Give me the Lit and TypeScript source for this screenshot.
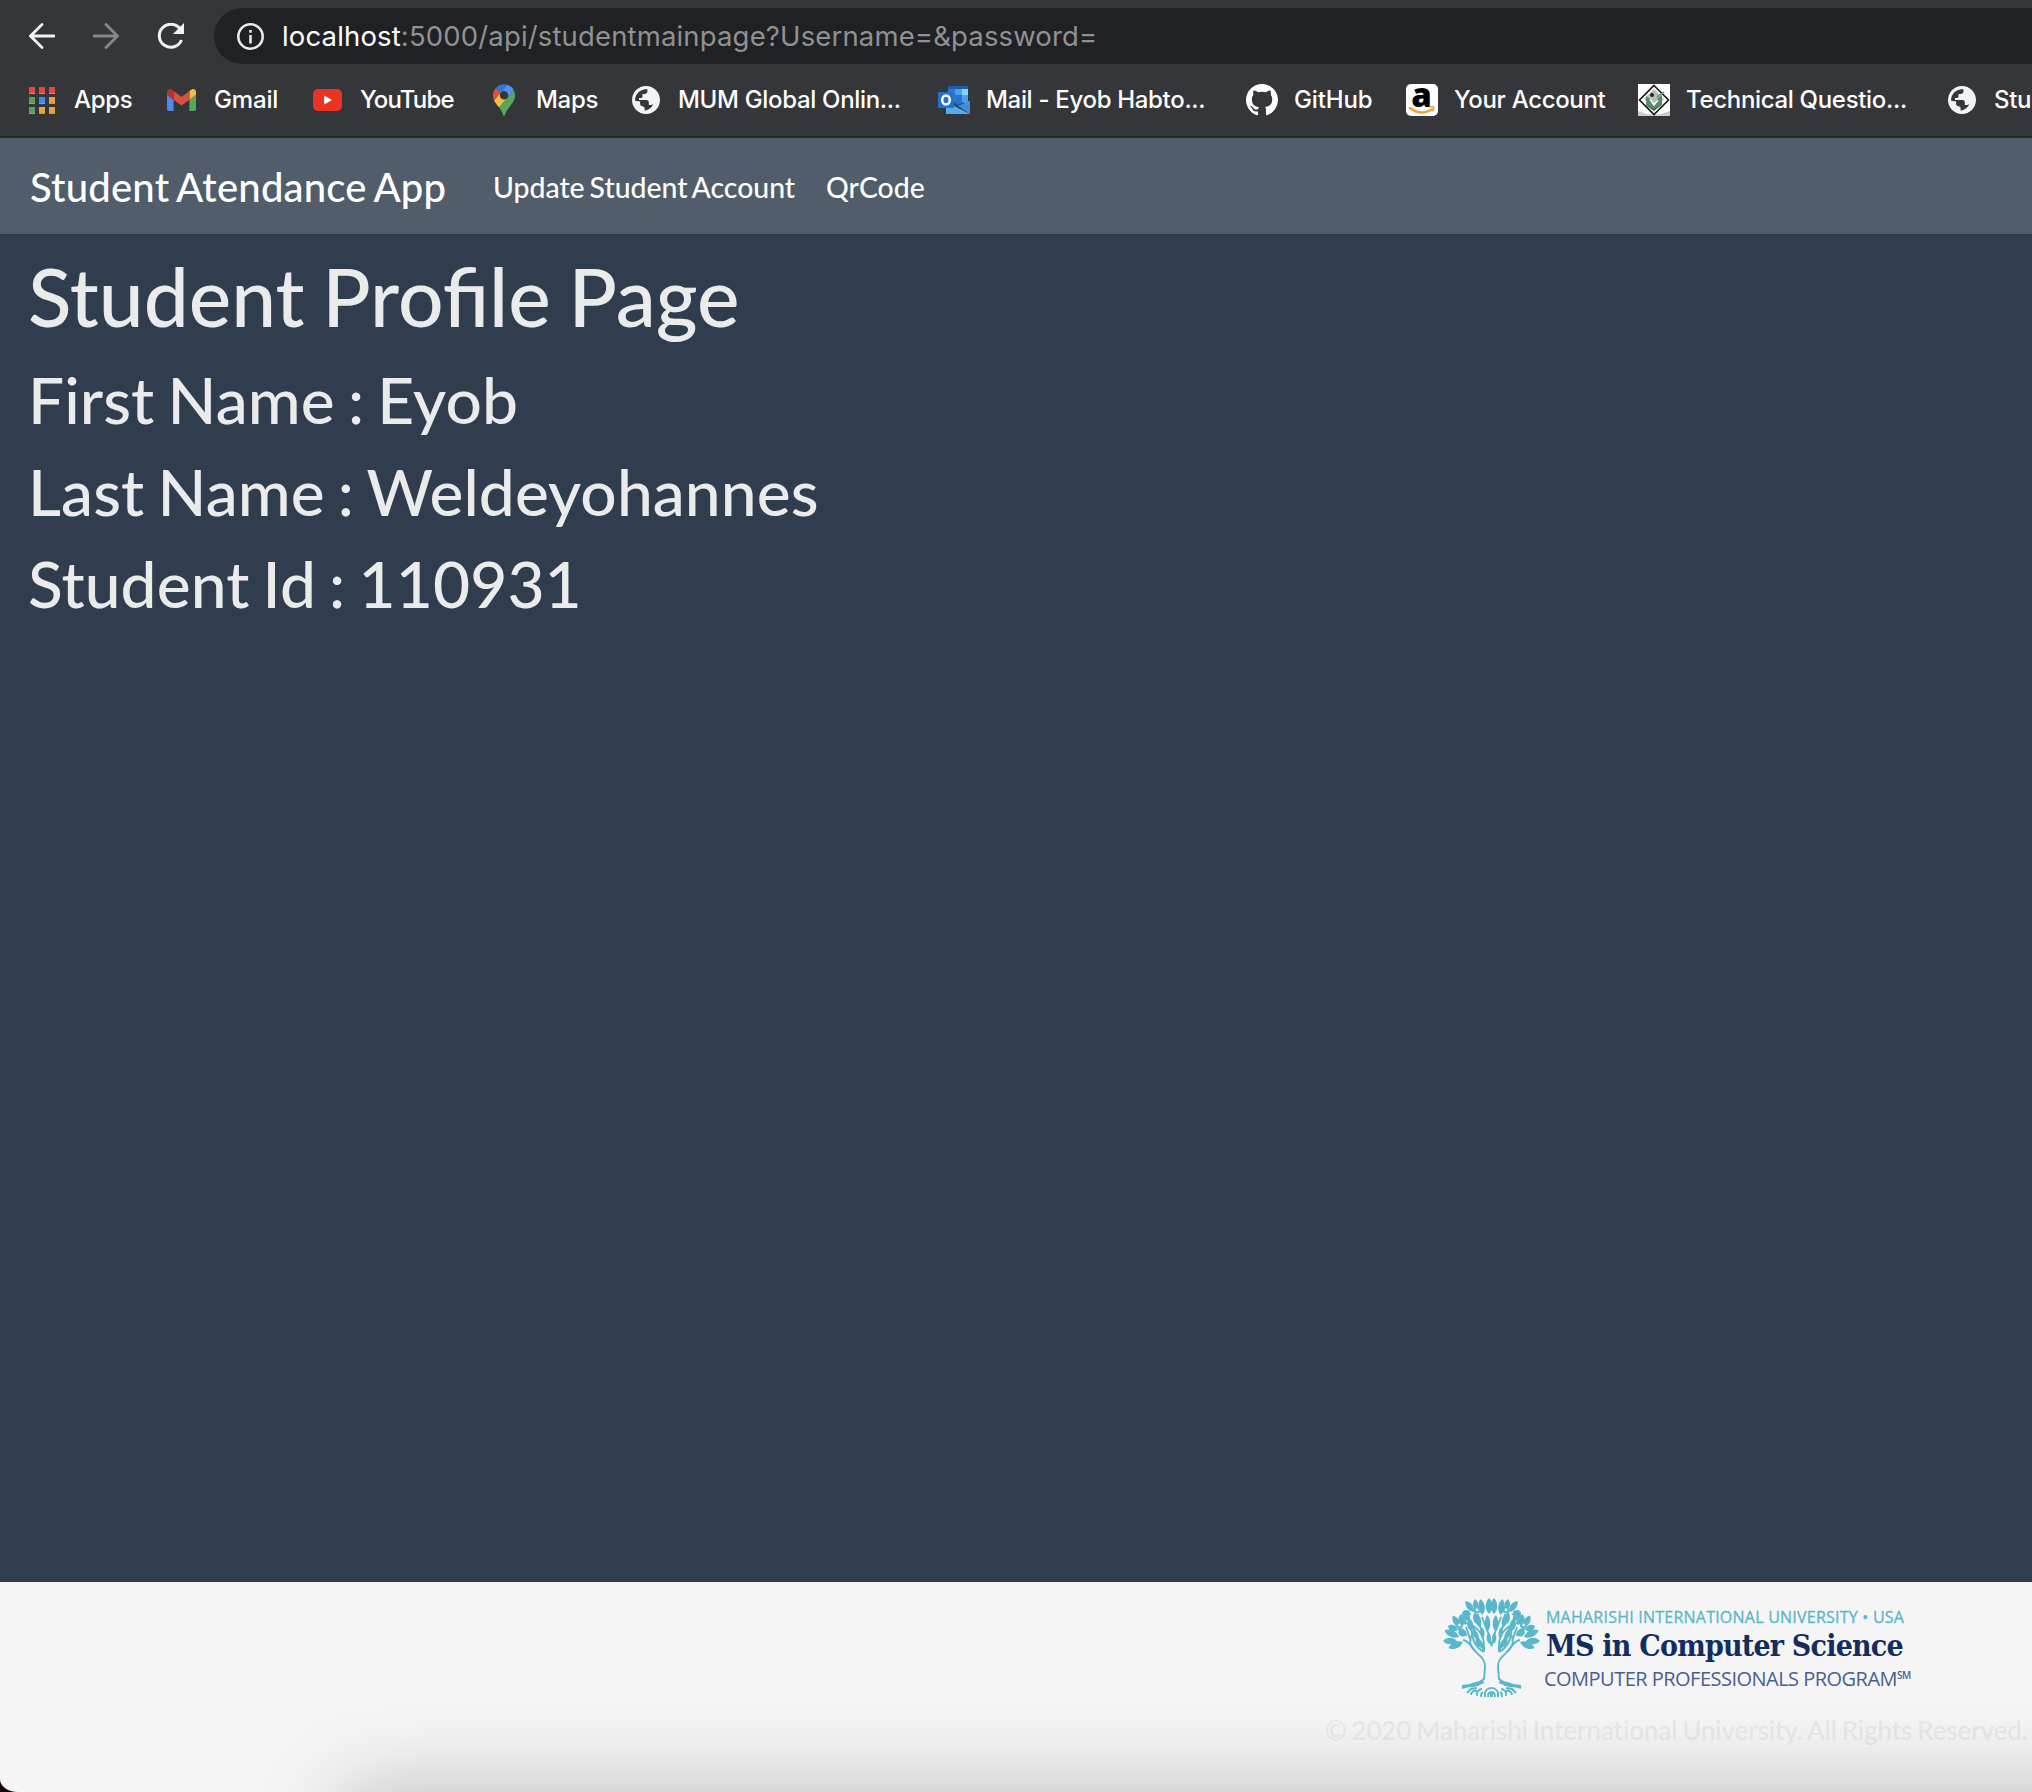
import { LitElement, html, css, svg } from "lit";
import { customElement } from "lit/decorators.js";

const globe = svg`<svg class="ic" width="28" height="28" viewBox="2 2 20 20"><path fill="#f1f3f4" d="M12 2C6.480 2 2 6.480 2 12s4.480 10 10 10 10-4.480 10-10S17.520 2 12 2z"/><path fill="#35363a" d="M4.200 12.600c-.3-4.200 3-8 7.300-8.300h1.500v1.700c0 1-.9 1.800-2 1.800H9.500v1.700c0 .6-.4 1-1 1H7v1.500h5.500c.8 0 1.500.700 1.500 1.500v2h1.800c.6 0 1.100-.3 1.400-.8-.8 2.500-3 4.500-6.200 4.900v-1.500c0-.9-.6-1.600-1.500-1.600s-1.700-.8-1.700-1.800v-1.600z"/></svg>`;

const icons: Record<string, unknown> = {
  apps: svg`<svg class="ic" width="26" height="27" viewBox="0 0 26 27">${["#e8453c", "#e8453c", "#e8453c", "#56a05b", "#4285f4", "#e8a33b", "#56a05b", "#e8a33b", "#e8a33b"].map((c, i) => svg`<rect x=${(i % 3) * 10} y=${Math.floor(i / 3) * 10 + 1} width="6" height="6" fill="#9b9c9e"/><rect x=${(i % 3) * 10} y=${Math.floor(i / 3) * 10} width="6" height="6" fill=${c}/>`)}</svg>`,
  gmail: svg`<svg class="ic" width="29" height="22" viewBox="52 42 88 66"><path fill="#5086ec" d="M58 108h14V74L52 59v43c0 3.320 2.690 6 6 6"/><path fill="#58a65c" d="M120 108h14c3.320 0 6-2.690 6-6V59l-20 15"/><path fill="#f1bd42" d="M120 48v26l20-15v-8c0-7.420-8.470-11.650-14.400-7.200"/><path fill="#d85140" d="M72 74V48l24 18 24-18v26L96 92"/><path fill="#b3362b" d="M52 51v8l20 15V48l-5.600-4.200c-5.940-4.450-14.400-.220-14.400 7.200"/></svg>`,
  youtube: svg`<svg class="ic" width="29" height="22" viewBox="0 0 29 22"><rect width="29" height="22" rx="5" fill="#eb3323"/><path fill="#fff" d="M11.200 6.500v9L19 11z"/></svg>`,
  maps: svg`<svg class="ic" width="22" height="32" viewBox="0 0 92.300 132.300"><path fill="#3174e0" d="M60.200 2.200C55.800.8 51 0 46.100 0 32 0 19.300 6.400 10.800 16.500l21.800 18.300z"/><path fill="#d85140" d="M10.800 16.500C4.100 24.500 0 34.900 0 46.100c0 8.700 1.700 15.700 4.600 22l28-33.300z"/><path fill="#5491f5" d="M46.200 28.500c9.800 0 17.700 7.900 17.700 17.700 0 4.300-1.600 8.300-4.200 11.400 0 0 13.900-16.600 27.500-32.700-5.600-10.800-15.300-19-27-22.700L32.600 34.800c3.300-3.800 8.100-6.300 13.600-6.300"/><path fill="#f1bd42" d="M46.200 63.800c-9.800 0-17.700-7.900-17.700-17.700 0-4.300 1.500-8.300 4.100-11.300l-28 33.300c4.800 10.600 12.800 19.200 21 29.900l34.100-40.500c-3.300 3.900-8.100 6.300-13.500 6.300"/><path fill="#58a65c" d="M59.100 109.200c15.400-24.100 33.300-35 33.300-63 0-7.700-1.900-14.900-5.200-21.300L25.600 98c2.600 3.400 5.300 7.300 7.900 11.300 9.400 14.500 6.800 23.100 12.800 23.100s3.400-8.700 12.800-23.200"/></svg>`,
  globe,
  outlook: svg`<svg class="ic" width="32" height="28" viewBox="0 0 32 28"><path fill="#1f5bb0" d="M10 0h20v4H10z"/><path fill="#2e78d2" d="M10 3h7v15h-7z"/><path fill="#4aa0e8" d="M17 3h7v7h-7z"/><path fill="#7dd8fb" d="M24 3h6v6h-6z"/><path fill="#2b72cc" d="M17 9h7v10h-7z"/><path fill="#4aa0e8" d="M24 9h6v8h-6z"/><path fill="#1d4b91" d="M16 16l4 3 6-3v2l-6 4-4-2z"/><path fill="#3c8ede" d="M32 14.500V28L20 20z"/><path fill="#55ace9" d="M8 16l24 12H8z"/><rect y="6" width="16" height="16" rx="1" fill="#2470cc"/><ellipse cx="8" cy="14" rx="3.800" ry="4.500" fill="none" stroke="#fff" stroke-width="2.500"/></svg>`,
  github: svg`<svg class="ic" width="32" height="32" viewBox="0 0 16 16"><path fill="#fff" d="M8 0C3.580 0 0 3.580 0 8c0 3.540 2.290 6.530 5.470 7.590.4.070.55-.17.55-.38 0-.19-.01-.82-.01-1.490-2.010.37-2.530-.49-2.690-.94-.09-.23-.48-.94-.82-1.130-.28-.15-.68-.52-.01-.53.63-.01 1.080.58 1.230.82.72 1.210 1.870.87 2.330.66.07-.52.28-.87.51-1.070-1.780-.2-3.640-.89-3.640-3.950 0-.87.31-1.590.82-2.150-.08-.2-.36-1.020.08-2.120 0 0 .67-.21 2.200.82.64-.18 1.320-.27 2-.27s1.360.09 2 .27c1.530-1.040 2.200-.82 2.200-.82.44 1.100.16 1.920.08 2.120.51.56.82 1.270.82 2.150 0 3.070-1.870 3.750-3.650 3.950.29.25.54.73.54 1.480 0 1.070-.01 1.930-.01 2.200 0 .21.15.46.55.38A8.010 8.010 0 0 0 16 8c0-4.420-3.580-8-8-8z"/></svg>`,
  amazon: svg`<svg class="ic" width="32" height="32" viewBox="0 0 32 32"><rect width="32" height="32" rx="5" fill="#fff"/><text x="15.500" y="22.500" text-anchor="middle" font-family="Open Sans, sans-serif" font-weight="800" font-size="33" fill="#000">a</text><path d="M4 24c7 5.500 15 5.500 22 1.500" fill="none" stroke="#f19e38" stroke-width="2.400" stroke-linecap="round"/><path d="M23.500 23.300c2-.8 3.500-.8 4-.4.500.8 0 2.800-1.300 4.300" fill="none" stroke="#f19e38" stroke-width="1.600"/></svg>`,
  geeks: svg`<svg class="ic" width="32" height="32" viewBox="0 0 32 32"><rect width="32" height="32" fill="#fff"/><path d="M0 27q16 7 32 0v5H0z" fill="#ccc"/><path d="M16 1.500L30.500 16 16 30.500 1.500 16z" fill="#fff" stroke="#151515" stroke-width="1.600"/><path d="M16 5l10 10-10 12L6 15z" fill="#b9bebc"/><path d="M8 12l6 4 2 5 3-6 5-4v10l-8 6-8-5z" fill="#5b8c6b"/><path d="M10 21l6 4 7-4-7 5z" fill="#2c4a37"/><path d="M12 15l4 6 4-5" stroke="#fff" stroke-width="1.500" fill="none"/><path d="M19 13l7-5" stroke="#5b9c70" stroke-width="1.800"/><circle cx="14" cy="11" r="2" fill="#222"/></svg>`,
};

const bookmarks: [string, string, string][] = [
  ["apps", "Apps", "b0"], ["gmail", "Gmail", "b1"], ["youtube", "YouTube", "b2"], ["maps", "Maps", "b3"],
  ["globe", "MUM Global Onlin...", "b4"], ["outlook", "Mail - Eyob Habto...", "b5"], ["github", "GitHub", "b6"],
  ["amazon", "Your Account", "b7"], ["geeks", "Technical Questio...", "b8"], ["globe", "Stu", "b9"],
];

const leaf = (x: number, y: number, a: number, l = 15, w = 4.400) =>
  svg`<path fill="#58b8c9" transform="translate(${x} ${y}) rotate(${a})" d="M0 0C${-w} ${-l * 0.300} ${-w} ${-l * 0.700} 0 ${-l}C${w} ${-l * 0.700} ${w} ${-l * 0.300} 0 0z"/>`;

const halfTree = svg`
  ${leaf(46, 17, 0, 16)}${leaf(39.500, 18, -7, 16)}${leaf(33, 13, -4, 11, 3.500)}${leaf(31, 15, -38, 14, 4)}${leaf(28, 18, -60, 9, 3.500)}
  ${leaf(27, 24, -40, 12)}${leaf(19, 30, -6, 13, 4)}${leaf(16, 30, -28, 13, 4)}${leaf(15, 33, -68, 11, 4)}${leaf(24, 27, -55, 8, 3.500)}
  ${leaf(16, 40, -65, 16)}${leaf(14, 44, -90, 14)}${leaf(20, 45, -113, 16)}${leaf(24, 39, -48, 12, 4)}${leaf(28, 34, -8, 13, 4)}
  ${leaf(37, 31, -12, 14, 3.600)}${leaf(45, 34, -3, 16, 3.600)}${leaf(46, 47, -2, 12, 2.800)}${leaf(33, 27, -5, 12, 3.200)}
  ${leaf(40, 42, -6, 12, 2.800)}${leaf(40, 51, -38, 12, 4)}${leaf(35, 43, -25, 12, 3.400)}${leaf(22, 39, -60, 8, 3)}
  <g fill="none" stroke="#58b8c9" stroke-width="1.900">
    <path d="M48.500 49L46 38 42 28 39 20M41 55C42 40 38 34 29 28c-1 10 1 21 12 27M41 54L30 30M20 43c6 0 10 10 16 15 5 4 6 7 6 12l-1 12c-5 5-9 3-14 6l-8 1c5 0 8 1 12 0l10-4"/>
    <path d="M29 38c-4 6-1 13 4 17M23 30l5 14M35 17l1 10 4 10"/>
    <path d="M24 96l4-4 6-1M28 98c0-3 3-5 6-4M34 99c-1-4 2-7 5-7M38 100c0-3 0-4 2-5M42 100c-1-6 2-9 6.500-9M45 100c0-3 1-5 3.500-5M48 100v-4M19 91l9-3 8 0"/>
    <circle cx="34" cy="13" r="2.400" fill="#f5f5f5"/><circle cx="16.500" cy="28" r="2.400" fill="#f5f5f5"/>
  </g>`;

@customElement("app-root")
export class AppRoot extends LitElement {
  static styles = css`
    :host { display: block; background: #20000c; }
    * { box-sizing: border-box; }
    .window { position: relative; height: 1792px; overflow: hidden; display: flex; flex-direction: column; background: #303d4e; border-bottom-left-radius: 18px 13px; font-family: Lato, sans-serif; white-space: nowrap; }
    .chrome { height: 138px; background: #35363a; border-bottom: 2px solid #292929; font-family: Inter, sans-serif; color: #fff; flex: none; }
    .toolbar { display: flex; align-items: center; height: 64px; padding: 8px 0 0 29px; }
    .tool { display: block; flex: none; margin-right: 38px; }
    .tool.reload { margin-right: 30px; }
    .omnibox { flex: 1; height: 56px; background: #202124; border-radius: 28px 0 0 28px; display: flex; align-items: center; padding-left: 23px; gap: 18px; font-size: 27.500px; }
    .omnibox svg { display: block; flex: none; }
    .url { color: #909193; letter-spacing: 0.150px; }
    .host { color: #fff; }
    .bookmarks { display: flex; align-items: center; height: 72px; padding-left: 29px; font-size: 24px; font-weight: 450; }
    .bookmark { display: flex; align-items: center; flex: none; height: 32px; }
    .ic { display: block; flex: none; overflow: visible; }
    .label { flex: none; line-height: 32px; letter-spacing: -0.320px; }
    .b0 { width: 138px; gap: 19px; } .b1 { width: 146px; gap: 18px; } .b2 { width: 180px; gap: 18px; }
    .b3 { width: 139px; gap: 21px; } .b4 { width: 306px; gap: 18px; } .b5 { width: 308px; gap: 16px; }
    .b6 { width: 160px; gap: 16px; } .b7 { width: 232px; gap: 16px; } .b8 { width: 310px; gap: 16px; } .b9 { width: 84px; gap: 18px; }
    .b1 .label, .b6 .label { letter-spacing: -0.150px; }
    .b2 .label { letter-spacing: -0.850px; }
    .navbar { height: 96px; flex: none; background: #515d6b; display: flex; align-items: center; color: #fff; padding: 2px 0 0 30px; font-size: 28.400px; font-weight: 500; word-spacing: -2.200px; }
    .brand { font-size: 40px; width: 463px; letter-spacing: 0.200px; }
    .link { width: 333px; }
    .main { flex: 1; color: #ebebeb; padding: 12px 28px; }
    .title { margin: 0; padding-top: 2px; font-size: 80.200px; font-weight: 500; line-height: 96px; word-spacing: -2.500px; }
    .field { margin: 0 0 16px; font-size: 64px; font-weight: 500; line-height: 76px; word-spacing: -3.100px; letter-spacing: 0.100px; }
    .title + .field { margin-top: 18px; }
    .footer { height: 210px; flex: none; background: #f5f5f5; padding: 15px 0 0 1443px; }
    .logo { display: flex; gap: 6px; height: 101px; }
    .tree { display: block; flex: none; }
    .words { padding-top: 8px; }
    .uni { font: 500 16px/24px "Open Sans", sans-serif; color: #58b8c9; height: 24px; letter-spacing: 0.230px; -webkit-text-stroke: 0.300px #58b8c9; }
    .ms { font: bold 30px/34px "DejaVu Serif Condensed", "DejaVu Serif", serif; font-stretch: condensed; color: #132e5e; height: 34px; letter-spacing: -0.800px; }
    .cpp { font: 20px/25px "Open Sans", sans-serif; color: #4a5f8f; height: 28px; letter-spacing: -0.520px; margin-left: -2px; }
    .sm { font-size: 10px; vertical-align: 7px; font-weight: 600; }
    .copy { margin: 15px 0 0 -118px; font-size: 26px; line-height: 34px; color: #e8e8e8; font-weight: 500; word-spacing: -1.560px; letter-spacing: -0.095px; font-variant-ligatures: none; }
    .shade { position: absolute; left: 345px; top: 1797px; width: 2200px; height: 400px; box-shadow: 0 0 84px rgba(0, 0, 0, 0.270); }
  `;

  render() {
    return html`<div class="window">
      <header class="chrome">
        <div class="toolbar">
          <svg class="tool" width="26" height="26" viewBox="0 0 26 26" fill="none" stroke="#f1f3f4" stroke-width="2.800" stroke-linecap="round"><path d="M25 13H2M13 1.500L1.500 13 13 24.500"/></svg>
          <svg class="tool" width="26" height="26" viewBox="0 0 26 26" fill="none" stroke="#868789" stroke-width="2.800" stroke-linecap="round"><path d="M1 13h23M13 1.500L24.500 13 13 24.500"/></svg>
          <svg class="tool reload" width="27" height="26" viewBox="0 0 27 26"><path d="M23.500 6.500A11.500 11.500 0 1 0 24.500 17" fill="none" stroke="#f1f3f4" stroke-width="3"/><path fill="#f1f3f4" d="M27 0v11H16z"/></svg>
          <div class="omnibox">
            <svg width="27" height="27" viewBox="0 0 27 27"><circle cx="13.500" cy="13.500" r="12.200" fill="none" stroke="#e8eaed" stroke-width="2.600"/><path d="M12.200 7h2.600v2.800h-2.600zM12.200 12h2.600v8.500h-2.600z" fill="#e8eaed"/></svg>
            <span class="url"><span class="host">localhost</span>:5000/api/studentmainpage?Username=&amp;password=</span>
          </div>
        </div>
        <nav class="bookmarks">${bookmarks.map(([icon, label, cls]) => html`<div class="bookmark ${cls}">${icons[icon]}<span class="label">${label}</span></div>`)}</nav>
      </header>
      <nav class="navbar"><span class="brand">Student Atendance App</span><span class="link">Update Student Account</span><span>QrCode</span></nav>
      <main class="main">
        <h1 class="title">Student Profile Page</h1>
        <h2 class="field">First Name : Eyob</h2>
        <h2 class="field">Last Name : Weldeyohannes</h2>
        <h2 class="field">Student Id : 110931</h2>
      </main>
      <footer class="footer">
        <div class="logo">
          <svg class="tree" width="97" height="101" viewBox="0 0 97 101">${halfTree}<g transform="translate(97 0) scale(-1 1)">${halfTree}</g></svg>
          <div class="words">
            <div class="uni">MAHARISHI INTERNATIONAL UNIVERSITY • USA</div>
            <div class="ms">MS in Computer Science</div>
            <div class="cpp">COMPUTER PROFESSIONALS PROGRAM<span class="sm">SM</span></div>
          </div>
        </div>
        <p class="copy">© 2020 Maharishi International University. All Rights Reserved.</p>
      </footer>
      <div class="shade"></div>
    </div>`;
  }
}
